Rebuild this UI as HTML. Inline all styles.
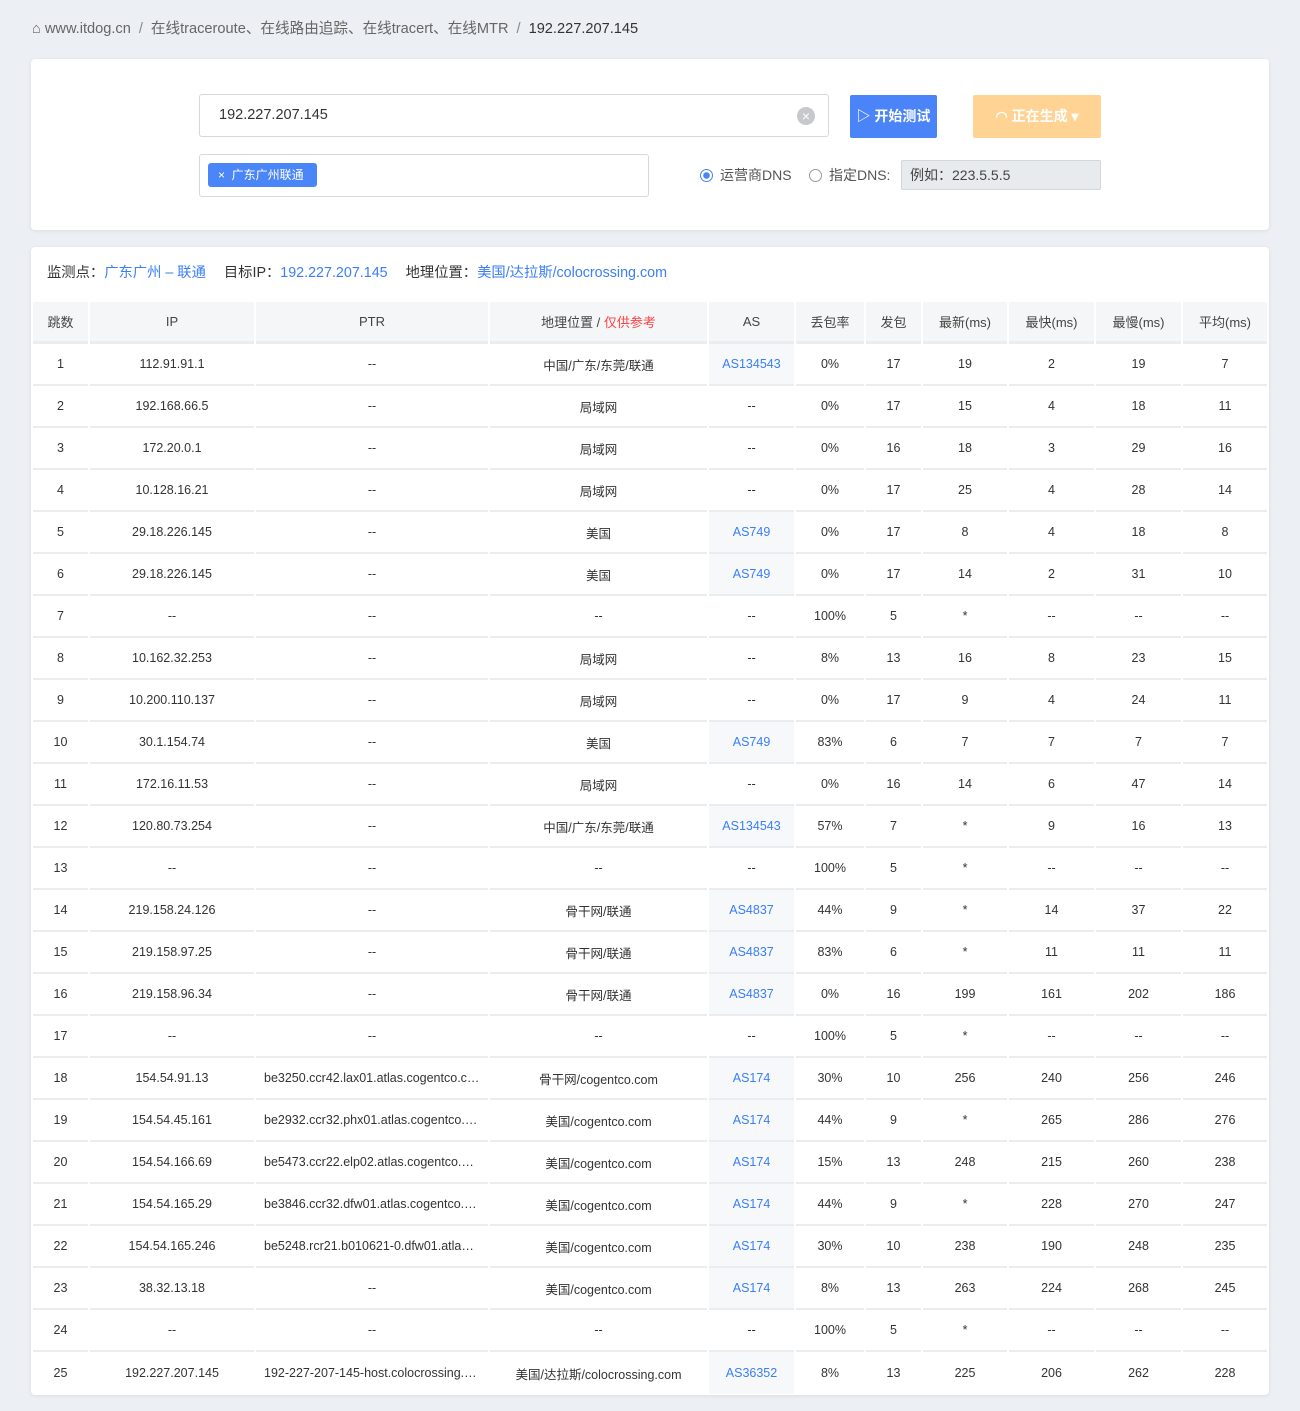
<!DOCTYPE html>
<html><head><meta charset="utf-8"><style>
*{box-sizing:border-box;margin:0;padding:0}
body{width:1300px;height:1411px;background:#eceff3;font-family:"Liberation Sans","Noto Sans CJK SC",sans-serif;color:#333;overflow:hidden}
.bc{position:absolute;left:32px;top:19px;font-size:14.6px;color:#666;line-height:20px}
.bc b{font-weight:normal;color:#333}
.bc i{font-style:normal;margin:0 8px;color:#888}
.card{position:absolute;left:31px;width:1238px;background:#fff;border-radius:4px;box-shadow:0 1px 4px rgba(0,0,0,.08);overflow:hidden}
.c1{top:59px;height:171px}
.c2{top:247px;height:1148px}
.inp{position:absolute;left:168px;top:35px;width:630px;height:43px;border:1px solid #d5d8dd;border-radius:3px;font-size:14.5px;line-height:41px;padding-left:19px;color:#333}
.clr{position:absolute;right:13px;top:12px;width:18px;height:18px;border-radius:50%;background:#c6c8cc;color:#fff;font-size:14px;line-height:18px;text-align:center}
.sel{position:absolute;left:168px;top:95px;width:450px;height:43px;border:1px solid #d5d8dd;border-radius:3px}
.tag{position:absolute;left:8px;top:8px;height:24px;width:109px;background:#4b86f8;border-radius:3px;color:#fff;font-size:12px;line-height:24px;padding-left:10px}
.btn1{position:absolute;left:819px;top:36px;width:87px;height:43px;background:#4a84f8;color:#fff;font-size:14px;line-height:43px;text-align:center;border-radius:2px;font-weight:bold}
.btn2{position:absolute;left:942px;top:36px;width:128px;height:43px;background:#fed393;color:#fff;font-size:14px;line-height:43px;text-align:center;border-radius:2px;font-weight:bold}
.rad{position:absolute;top:106px;font-size:14px;color:#555;line-height:20px}
.rad span{display:inline-block;width:13px;height:13px;border-radius:50%;border:1px solid #999;vertical-align:-2px;margin-right:7px}
.rad span.on{border:1px solid #4a84f8;background:radial-gradient(#4a84f8 3px,#fff 3.5px)}
.dns{position:absolute;left:870px;top:101px;width:200px;height:30px;background:#e8ebee;border:1px solid #d3d6da;border-radius:2px;font-size:14px;line-height:28px;padding-left:8px;color:#444}
.info{position:absolute;left:16px;top:16px;font-size:14.3px;line-height:20px;color:#333}
.info a{color:#3b7ef6;text-decoration:none;margin-right:18px}
table{position:absolute;left:0;top:55px;width:1238px;border-collapse:separate;border-spacing:2px 0;table-layout:fixed;font-size:12.5px}
th{background:#f5f6f7;height:42px;font-weight:normal;color:#444;font-size:13px;border-bottom:3px solid #eaedf0;padding:0}
td{height:42px;text-align:center;border-bottom:2px solid #eaedf0;color:#333;white-space:nowrap;overflow:hidden;text-overflow:ellipsis;padding:0}
td:nth-child(5){background:#f6f8fa;color:#3b7ef6}
td:nth-child(3){padding:0 8px}
tr:last-child td{border-bottom:none}
.r{color:#f44}
</style></head><body>
<div class="bc">⌂ www.itdog.cn<i>/</i>在线traceroute、在线路由追踪、在线tracert、在线MTR<i>/</i><b>192.227.207.145</b></div>
<div class="card c1">
<div class="inp">192.227.207.145<div class="clr">×</div></div>
<div class="sel"><div class="tag">× &nbsp;广东广州联通</div></div>
<div class="btn1">▷ 开始测试</div>
<div class="btn2">◠ 正在生成 ▾</div>
<div class="rad" style="left:669px"><span class="on"></span>运营商DNS</div>
<div class="rad" style="left:778px"><span></span>指定DNS:</div>
<div class="dns">例如：223.5.5.5</div>
</div>
<div class="card c2">
<div class="info">监测点：<a>广东广州 – 联通</a>目标IP：<a>192.227.207.145</a>地理位置：<a>美国/达拉斯/colocrossing.com</a></div>
<table>
<colgroup><col style="width:55px"><col style="width:164px"><col style="width:232px"><col style="width:217px"><col style="width:85px"><col style="width:68px"><col style="width:55px"><col style="width:84px"><col style="width:85px"><col style="width:85px"><col style="width:84px"></colgroup>
<tr><th>跳数</th><th>IP</th><th>PTR</th><th>地理位置 / <span class="r">仅供参考</span></th><th>AS</th><th>丢包率</th><th>发包</th><th>最新(ms)</th><th>最快(ms)</th><th>最慢(ms)</th><th>平均(ms)</th></tr>
<tr><td>1</td><td>112.91.91.1</td><td>--</td><td>中国/广东/东莞/联通</td><td>AS134543</td><td>0%</td><td>17</td><td>19</td><td>2</td><td>19</td><td>7</td></tr>
<tr><td>2</td><td>192.168.66.5</td><td>--</td><td>局域网</td><td style="color:#333;background:none">--</td><td>0%</td><td>17</td><td>15</td><td>4</td><td>18</td><td>11</td></tr>
<tr><td>3</td><td>172.20.0.1</td><td>--</td><td>局域网</td><td style="color:#333;background:none">--</td><td>0%</td><td>16</td><td>18</td><td>3</td><td>29</td><td>16</td></tr>
<tr><td>4</td><td>10.128.16.21</td><td>--</td><td>局域网</td><td style="color:#333;background:none">--</td><td>0%</td><td>17</td><td>25</td><td>4</td><td>28</td><td>14</td></tr>
<tr><td>5</td><td>29.18.226.145</td><td>--</td><td>美国</td><td>AS749</td><td>0%</td><td>17</td><td>8</td><td>4</td><td>18</td><td>8</td></tr>
<tr><td>6</td><td>29.18.226.145</td><td>--</td><td>美国</td><td>AS749</td><td>0%</td><td>17</td><td>14</td><td>2</td><td>31</td><td>10</td></tr>
<tr><td>7</td><td>--</td><td>--</td><td>--</td><td style="color:#333;background:none">--</td><td>100%</td><td>5</td><td>*</td><td>--</td><td>--</td><td>--</td></tr>
<tr><td>8</td><td>10.162.32.253</td><td>--</td><td>局域网</td><td style="color:#333;background:none">--</td><td>8%</td><td>13</td><td>16</td><td>8</td><td>23</td><td>15</td></tr>
<tr><td>9</td><td>10.200.110.137</td><td>--</td><td>局域网</td><td style="color:#333;background:none">--</td><td>0%</td><td>17</td><td>9</td><td>4</td><td>24</td><td>11</td></tr>
<tr><td>10</td><td>30.1.154.74</td><td>--</td><td>美国</td><td>AS749</td><td>83%</td><td>6</td><td>7</td><td>7</td><td>7</td><td>7</td></tr>
<tr><td>11</td><td>172.16.11.53</td><td>--</td><td>局域网</td><td style="color:#333;background:none">--</td><td>0%</td><td>16</td><td>14</td><td>6</td><td>47</td><td>14</td></tr>
<tr><td>12</td><td>120.80.73.254</td><td>--</td><td>中国/广东/东莞/联通</td><td>AS134543</td><td>57%</td><td>7</td><td>*</td><td>9</td><td>16</td><td>13</td></tr>
<tr><td>13</td><td>--</td><td>--</td><td>--</td><td style="color:#333;background:none">--</td><td>100%</td><td>5</td><td>*</td><td>--</td><td>--</td><td>--</td></tr>
<tr><td>14</td><td>219.158.24.126</td><td>--</td><td>骨干网/联通</td><td>AS4837</td><td>44%</td><td>9</td><td>*</td><td>14</td><td>37</td><td>22</td></tr>
<tr><td>15</td><td>219.158.97.25</td><td>--</td><td>骨干网/联通</td><td>AS4837</td><td>83%</td><td>6</td><td>*</td><td>11</td><td>11</td><td>11</td></tr>
<tr><td>16</td><td>219.158.96.34</td><td>--</td><td>骨干网/联通</td><td>AS4837</td><td>0%</td><td>16</td><td>199</td><td>161</td><td>202</td><td>186</td></tr>
<tr><td>17</td><td>--</td><td>--</td><td>--</td><td style="color:#333;background:none">--</td><td>100%</td><td>5</td><td>*</td><td>--</td><td>--</td><td>--</td></tr>
<tr><td>18</td><td>154.54.91.13</td><td>be3250.ccr42.lax01.atlas.cogentco.com</td><td>骨干网/cogentco.com</td><td>AS174</td><td>30%</td><td>10</td><td>256</td><td>240</td><td>256</td><td>246</td></tr>
<tr><td>19</td><td>154.54.45.161</td><td>be2932.ccr32.phx01.atlas.cogentco.com</td><td>美国/cogentco.com</td><td>AS174</td><td>44%</td><td>9</td><td>*</td><td>265</td><td>286</td><td>276</td></tr>
<tr><td>20</td><td>154.54.166.69</td><td>be5473.ccr22.elp02.atlas.cogentco.com</td><td>美国/cogentco.com</td><td>AS174</td><td>15%</td><td>13</td><td>248</td><td>215</td><td>260</td><td>238</td></tr>
<tr><td>21</td><td>154.54.165.29</td><td>be3846.ccr32.dfw01.atlas.cogentco.com</td><td>美国/cogentco.com</td><td>AS174</td><td>44%</td><td>9</td><td>*</td><td>228</td><td>270</td><td>247</td></tr>
<tr><td>22</td><td>154.54.165.246</td><td>be5248.rcr21.b010621-0.dfw01.atlas.cogentco.com</td><td>美国/cogentco.com</td><td>AS174</td><td>30%</td><td>10</td><td>238</td><td>190</td><td>248</td><td>235</td></tr>
<tr><td>23</td><td>38.32.13.18</td><td>--</td><td>美国/cogentco.com</td><td>AS174</td><td>8%</td><td>13</td><td>263</td><td>224</td><td>268</td><td>245</td></tr>
<tr><td>24</td><td>--</td><td>--</td><td>--</td><td style="color:#333;background:none">--</td><td>100%</td><td>5</td><td>*</td><td>--</td><td>--</td><td>--</td></tr>
<tr><td>25</td><td>192.227.207.145</td><td>192-227-207-145-host.colocrossing.com</td><td>美国/达拉斯/colocrossing.com</td><td>AS36352</td><td>8%</td><td>13</td><td>225</td><td>206</td><td>262</td><td>228</td></tr>
</table>
</div>
</body></html>
